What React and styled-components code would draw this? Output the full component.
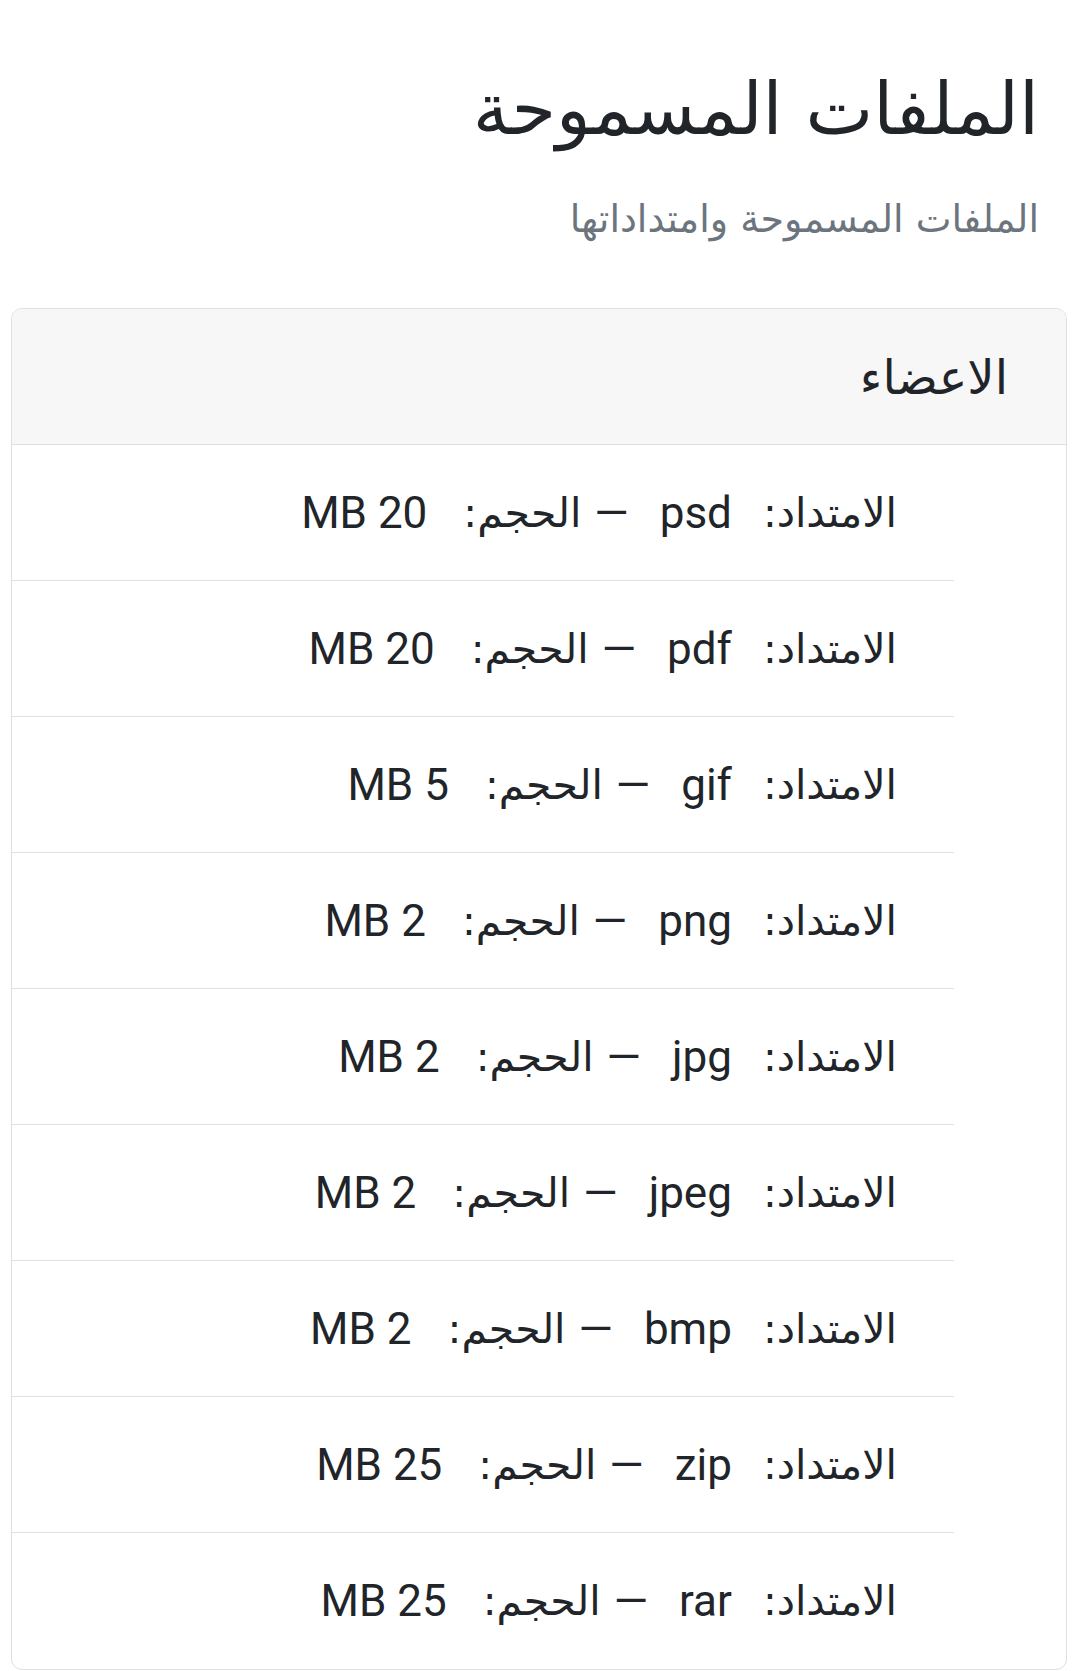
import React from "react";
import styled, { createGlobalStyle } from "styled-components";

const Global = createGlobalStyle`
  html, body { margin: 0; padding: 0; background: #fff; }
  body {
    font-family: Roboto, "DejaVu Sans", sans-serif;
    color: #212529;
  }
`;

const Page = styled.div`
  direction: rtl;
  padding: 0 12px 0 11px;
  width: 1079px;
  box-sizing: border-box;
`;

const Intro = styled.header`
  padding: 59px 28px 0 0;
  height: 308px;
  box-sizing: border-box;
`;

const Title = styled.h1`
  margin: 0;
  font-family: "DejaVu Sans", sans-serif;
  font-weight: 400;
  font-size: 72px;
  line-height: 100px;
`;

const Subtitle = styled.p`
  margin: 30px 0 0;
  font-family: "DejaVu Sans", sans-serif;
  font-size: 38px;
  line-height: 60px;
  color: #6c757d;
`;

const Card = styled.section`
  border: 1px solid #dfdfdf;
  border-radius: 11px;
  overflow: hidden;
  background: #fff;
`;

const CardHeader = styled.div`
  background: #f7f7f7;
  border-bottom: 1px solid #dfdfdf;
  height: 136px;
  box-sizing: border-box;
  display: flex;
  align-items: center;
  padding: 0 58px 0 0;
  font-family: "DejaVu Sans", sans-serif;
  font-size: 48px;
`;

const List = styled.ul`
  list-style: none;
  margin: 0;
  padding: 0 112px 0 0;
`;

const Item = styled.li`
  height: 136px;
  box-sizing: border-box;
  border-bottom: ${(p) => (p.$last ? "none" : "1px solid #dfdfdf")};
  display: flex;
  align-items: center;
  padding: 0 57px 0 0;
  font-size: 44px;
  white-space: pre;
`;

const Label = styled.span`
  font-family: "DejaVu Sans", sans-serif;
  font-size: 41px;
`;

const Value = styled.span`
  font-family: Roboto, sans-serif;
  margin: 0 ${(p) => p.$gap}px;
`;

const Dash = styled.span`
  font-family: Roboto, sans-serif;
`;

const files = [
  ["psd", "20"],
  ["pdf", "20"],
  ["gif", "5"],
  ["png", "2"],
  ["jpg", "2"],
  ["jpeg", "2"],
  ["bmp", "2"],
  ["zip", "25"],
  ["rar", "25"],
];

export default function App() {
  return (
    <Page>
      <Global />
      <Intro>
        <Title>الملفات المسموحة</Title>
        <Subtitle>الملفات المسموحة وامتداداتها</Subtitle>
      </Intro>
      <Card>
        <CardHeader>الاعضاء</CardHeader>
        <List>
          {files.map(([ext, size], i) => (
            <Item key={ext} $last={i === files.length - 1}>
              <Label>الامتداد:</Label>
              <Value $gap={31}>{ext}</Value>
              <Dash>—</Dash>
              <Label> الحجم:</Label>
              <Value $gap={36}>{size} MB</Value>
            </Item>
          ))}
        </List>
      </Card>
    </Page>
  );
}
